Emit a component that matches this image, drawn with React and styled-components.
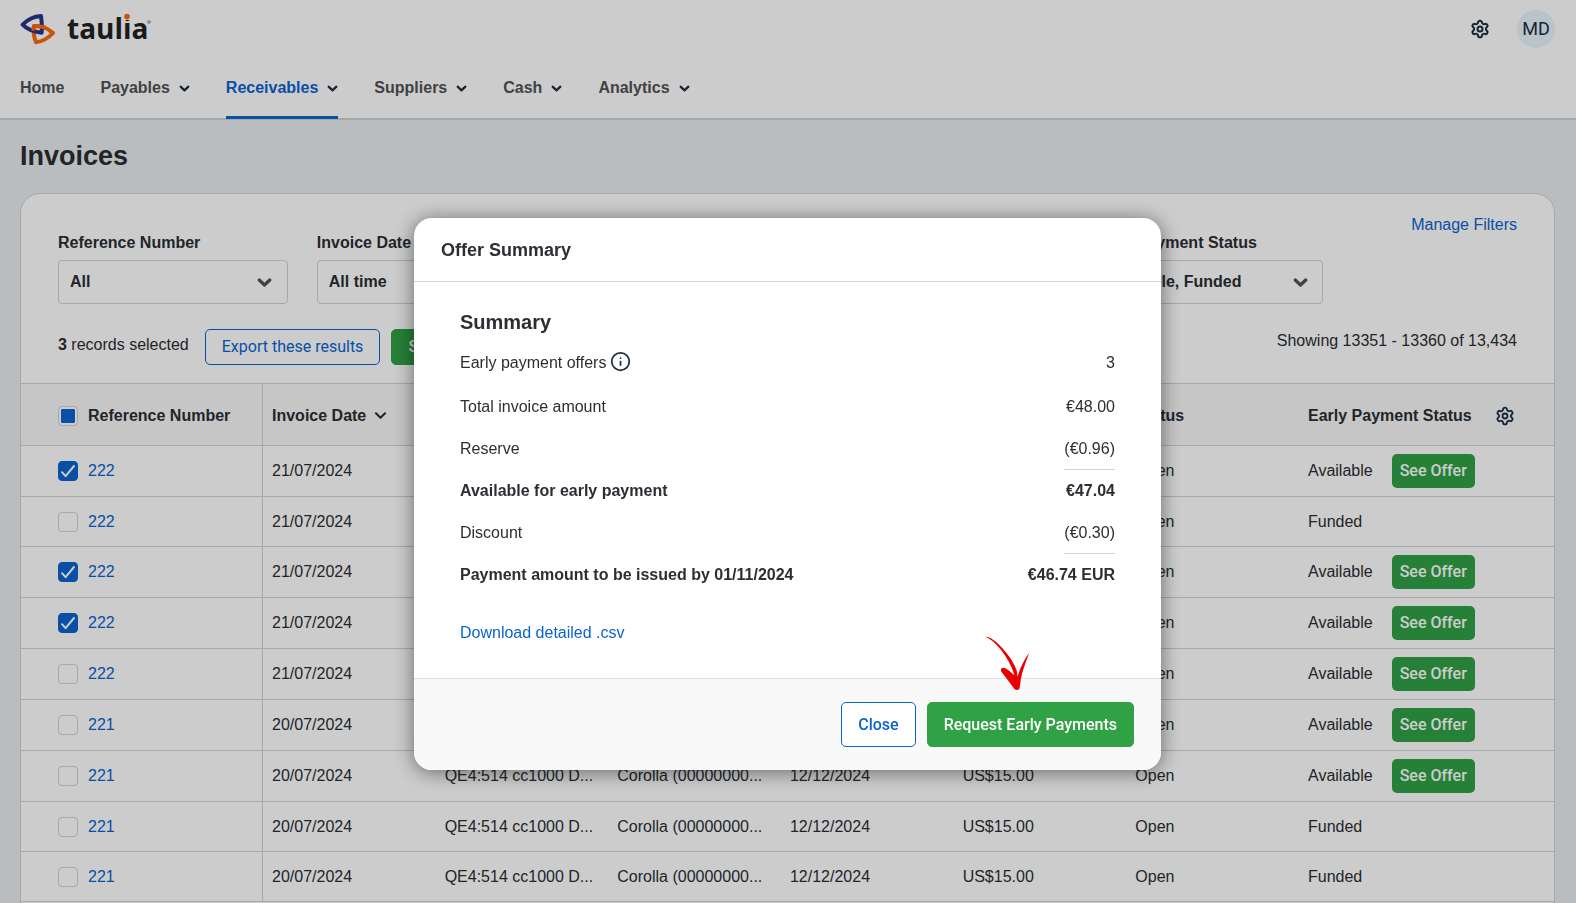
import React, { useEffect, useRef, useState } from 'react';
import styled, { createGlobalStyle } from 'styled-components';
import { Info, Settings } from 'lucide-react';

const blue = '#0a64d0';
const green = '#30a145';
const ink = '#2b2e33';
const line = '#d3d3d3';
const sans = '"Liberation Sans", Arial, sans-serif';
const medium = 'Roboto, "Liberation Sans", sans-serif';

const GlobalStyle = createGlobalStyle`
  *, *::before, *::after { box-sizing: border-box; }
  body {
    margin: 0;
    background: #e8edef;
    color: ${ink};
    font: 16px/20px ${sans};
  }
  h1, h2, h3, dl, dd { margin: 0; }
  button, select { font: inherit; color: inherit; }
`;

const Page = styled.div`
  height: 100vh;
  overflow: hidden;
`;

const Header = styled.header`
  background: #fff;
  border-bottom: 2px solid ${line};
`;

const TopBar = styled.div`
  display: flex;
  align-items: center;
  justify-content: space-between;
  height: 58px;
  padding: 0 21px 0 20px;
`;

const Brand = styled.a`
  display: flex;
  align-items: center;
  gap: 11px;
  color: #222;
  text-decoration: none;
`;

const Wordmark = styled.span`
  position: relative;
  padding-bottom: 2px;
  font: 700 28px/30px "Open Sans", sans-serif;
`;

const WordmarkDots = styled.svg`
  position: absolute;
  left: 0;
  top: 0;
  width: 86px;
  height: 32px;
`;

const Tools = styled.div`
  display: flex;
  align-items: center;
  gap: 27px;
`;

const IconButton = styled.button`
  display: flex;
  padding: 0;
  border: 0;
  background: none;
  color: #1d2d3e;
`;

const Avatar = styled.button`
  width: 38px;
  height: 38px;
  padding: 0;
  border: 0;
  border-radius: 50%;
  background: #e6f4fd;
  color: #1d2d3e;
  font: 18px/20px ${medium};
`;

const Nav = styled.nav`
  display: flex;
  gap: 36px;
  height: 60px;
  padding: 0 20px;
`;

const NavLink = styled.a`
  display: flex;
  align-items: center;
  gap: 9px;
  height: 61px;
  padding-top: 2px;
  border-bottom: 3px solid ${(p) => (p.$active ? blue : 'transparent')};
  color: ${(p) => (p.$active ? blue : '#505255')};
  font-weight: 700;
  text-decoration: none;
  svg { color: #1d2d3e; }
`;

const Main = styled.main`
  padding: 0 21px 0 20px;
`;

const PageTitle = styled.h1`
  padding: 20px 0 21px;
  font-size: 27px;
  line-height: 32px;
`;

const Card = styled.section`
  overflow: hidden;
  padding-bottom: 48px;
  border: 1px solid ${line};
  border-radius: 20px;
  background: #fff;
`;

const FilterBar = styled.div`
  display: flex;
  justify-content: space-between;
  padding: 21px 37px 0;
`;

const Filters = styled.div`
  display: grid;
  flex: 0 1 1265px;
  grid-template-columns: repeat(5, minmax(0, 1fr));
  gap: 29px;
  padding-top: 18px;
`;

const Field = styled.div`
  display: grid;
  gap: 7px;
`;

const FieldLabel = styled.label`
  font-weight: 700;
`;

const SelectBox = styled.div`
  display: grid;
  align-items: center;
  grid-template-columns: 1fr 46px;
  select {
    grid-area: 1 / 1 / 2 / 3;
    width: 100%;
    height: 44px;
    padding: 0 11px;
    appearance: none;
    border: 1px solid ${line};
    border-radius: 4px;
    background: transparent;
    font-weight: 700;
  }
  svg {
    grid-area: 1 / 2;
    justify-self: center;
    pointer-events: none;
    color: #505255;
  }
`;

const TextLink = styled.a`
  color: ${blue};
  text-decoration: none;
  white-space: nowrap;
`;

const ResultBar = styled.div`
  display: flex;
  align-items: flex-start;
  gap: 11px;
  padding: 25px 37px 18px;
`;

const ResultText = styled.p`
  margin: ${(p) => (p.$end ? '2px 0 0 auto' : '6px 5px 0 0')};
`;

const Button = styled.button`
  height: ${(p) => (p.$size === 'large' ? 45 : p.$size === 'small' ? 34 : 36)}px;
  padding: 0 ${(p) => (p.$size === 'small' ? 8 : 16)}px;
  border: 1px solid ${(p) => (p.$primary ? green : blue)};
  border-width: ${(p) => (p.$size === 'small' ? 0 : 1)}px;
  border-radius: 5px;
  background: ${(p) => (p.$primary ? green : '#fff')};
  color: ${(p) => (p.$primary ? '#fff' : blue)};
  font: ${(p) => (p.$plain ? 400 : 500)} 16px/20px ${medium};
  white-space: nowrap;
`;

const Table = styled.table`
  width: 100%;
  table-layout: fixed;
  border-collapse: separate;
  border-spacing: 0;
`;

const Col = styled.col`
  width: ${(p) => p.$width};
`;

const HeadCell = styled.th`
  height: 63px;
  padding: 2px 0 0 9px;
  border: solid ${line};
  border-width: 1px 0;
  background: #f8f8f8;
  text-align: left;
  white-space: nowrap;
  &:first-child {
    padding-left: 37px;
    border-right-width: 1px;
  }
`;

const Cell = styled.td`
  height: 50px;
  padding: 0 0 0 9px;
  border-bottom: 1px solid ${line};
  white-space: nowrap;
  &:first-child {
    padding-left: 37px;
    border-right: 1px solid ${line};
  }
`;

const Inline = styled.div`
  display: flex;
  align-items: center;
  gap: ${(p) => p.$gap}px;
`;

const StatusLine = styled(Inline)`
  padding: ${(p) => (p.$tall ? '8px 0' : '0')};
`;

const CheckBox = styled.span`
  display: grid;
  place-items: center;
  input {
    grid-area: 1 / 1;
    width: 20px;
    height: 20px;
    margin: 0;
    appearance: none;
    border: 1px solid ${line};
    border-radius: 4px;
    background: #fff;
  }
  input:checked {
    border-color: ${blue};
    background: ${blue};
  }
  input:indeterminate {
    padding: 2px;
    background: ${blue} content-box;
    box-shadow: inset 0 0 0 2px #fff;
  }
  svg {
    grid-area: 1 / 1;
    pointer-events: none;
  }
`;

const Overlay = styled.div`
  position: fixed;
  inset: 0;
  display: flex;
  align-items: flex-start;
  justify-content: center;
  padding: 218px 20px 0 19px;
  background: rgba(0, 0, 0, 0.2);
`;

const Dialog = styled.div`
  position: relative;
  width: 100%;
  max-width: 747px;
  border-radius: 18px;
  background: #fff;
  box-shadow: 0 2px 20px rgba(0, 0, 0, 0.5);
`;

const DialogHeader = styled.div`
  padding: 21px 27px 20px;
  border-bottom: 1px solid ${line};
`;

const DialogTitle = styled.h2`
  font-size: 18px;
  line-height: 22px;
`;

const DialogBody = styled.div`
  padding: 28px 46px 35px;
`;

const SummaryTitle = styled.h3`
  padding-bottom: 6px;
  font-size: 20px;
  line-height: 24px;
`;

const SummaryList = styled.dl`
  padding-bottom: 27px;
`;

const SummaryRow = styled.div`
  display: flex;
  align-items: center;
  justify-content: space-between;
  height: ${(p) => (p.$lead ? 46 : 42)}px;
  font-weight: ${(p) => (p.$total ? 700 : 400)};
  dt {
    display: flex;
    align-items: center;
    gap: 4px;
  }
  dt svg {
    margin-bottom: 4px;
    color: #1d2d3e;
  }
  dd {
    line-height: 40px;
    border-bottom: 1px solid ${(p) => (p.$ruled ? line : 'transparent')};
  }
`;

const DialogFooter = styled.div`
  display: flex;
  justify-content: flex-end;
  gap: 11px;
  padding: 23px 27px;
  border-top: 1px solid #dedede;
  border-radius: 0 0 18px 18px;
  background: #f9f9f9;
`;

const ArrowMark = styled.svg`
  position: absolute;
  right: 131px;
  bottom: 79px;
  width: 45px;
  height: 56px;
`;

function Chevron({ size = 11, weight = 2 }) {
  return (
    <svg width={size} height={size} viewBox="0 0 12 12" fill="none" aria-hidden="true">
      <path d="M1.8 4l4.2 4 4.2-4" stroke="currentColor" strokeWidth={weight} strokeLinecap="round" strokeLinejoin="round" />
    </svg>
  );
}

function LogoMark() {
  return (
    <svg width="36" height="32" viewBox="60 38 108 96" fill="none" strokeWidth="12" strokeLinejoin="round" aria-hidden="true">
      <path d="M102 77C122 75 145 84 159 98C146 112 128 123 108 126C102 112 100 92 102 77Z" stroke="#ff6a0a" />
      <path d="M68 73C82 58 104 48 123 47C125 62 127 78 125 97C106 95 82 88 68 73Z" stroke="#27348b" />
      <path d="M101 91C100 85 101 80 102 77C112 76 124 78 136 82" stroke="#ff6a0a" />
    </svg>
  );
}

function Check({ label, mixed = false, initial = false }) {
  const ref = useRef(null);
  const [on, setOn] = useState(initial);
  useEffect(() => {
    ref.current.indeterminate = mixed;
  }, [mixed]);
  return (
    <CheckBox>
      <input ref={ref} type="checkbox" aria-label={label} checked={on} onChange={(e) => setOn(e.target.checked)} />
      {on && (
        <svg width="20" height="20" viewBox="0 0 20 20" fill="none" aria-hidden="true">
          <path d="M4 11.2l3.6 4L16 5" stroke="#fff" strokeWidth="2" strokeLinecap="round" strokeLinejoin="round" />
        </svg>
      )}
    </CheckBox>
  );
}

const navItems = [
  { label: 'Home', plain: true },
  { label: 'Payables' },
  { label: 'Receivables', active: true },
  { label: 'Suppliers' },
  { label: 'Cash' },
  { label: 'Analytics' },
];

const filters = [
  { id: 'reference', label: 'Reference Number', value: 'All' },
  { id: 'invoice-date', label: 'Invoice Date', value: 'All time' },
  { id: 'due-date', label: 'Due Date', value: 'All time' },
  { id: 'status', label: 'Status', value: 'All' },
  { id: 'early-status', label: 'Early Payment Status', value: 'Available, Funded' },
];

const rows = [
  ['222', '21/07/2024', true, true],
  ['222', '21/07/2024', false, false],
  ['222', '21/07/2024', true, true],
  ['222', '21/07/2024', true, true],
  ['222', '21/07/2024', false, true],
  ['221', '20/07/2024', false, true],
  ['221', '20/07/2024', false, true],
  ['221', '20/07/2024', false, false],
  ['221', '20/07/2024', false, false],
].map(([ref, date, selected, available]) => ({ ref, date, selected, available }));

const summary = [
  { label: 'Early payment offers', value: '3', lead: true },
  { label: 'Total invoice amount', value: '€48.00' },
  { label: 'Reserve', value: '(€0.96)', ruled: true },
  { label: 'Available for early payment', value: '€47.04', total: true },
  { label: 'Discount', value: '(€0.30)', ruled: true },
  { label: 'Payment amount to be issued by 01/11/2024', value: '€46.74 EUR', total: true },
];

function InvoiceTable() {
  return (
    <Table>
      <colgroup>
        <Col $width="242px" />
        <Col span={6} $width="auto" />
        <Col $width="255px" />
      </colgroup>
      <thead>
        <tr>
          <HeadCell>
            <Inline $gap={10}>
              <Check label="Select all invoices" mixed />
              Reference Number
            </Inline>
          </HeadCell>
          <HeadCell>
            <Inline $gap={8}>
              Invoice Date
              <Chevron size={13} />
            </Inline>
          </HeadCell>
          <HeadCell>Customer</HeadCell>
          <HeadCell>Supplier</HeadCell>
          <HeadCell>Due Date</HeadCell>
          <HeadCell>Amount</HeadCell>
          <HeadCell>Status</HeadCell>
          <HeadCell>
            <Inline $gap={23}>
              Early Payment Status
              <IconButton aria-label="Table settings">
                <Settings size={20} strokeWidth={2.2} />
              </IconButton>
            </Inline>
          </HeadCell>
        </tr>
      </thead>
      <tbody>
        {rows.map((row, i) => (
          <tr key={i}>
            <Cell>
              <Inline $gap={10}>
                <Check label={`Select invoice ${row.ref}`} initial={row.selected} />
                <TextLink href="#invoice">{row.ref}</TextLink>
              </Inline>
            </Cell>
            <Cell>{row.date}</Cell>
            <Cell>QE4:514 cc1000 D...</Cell>
            <Cell>Corolla (00000000...</Cell>
            <Cell>12/12/2024</Cell>
            <Cell>US$15.00</Cell>
            <Cell>Open</Cell>
            <Cell>
              <StatusLine $gap={19} $tall={row.available}>
                {row.available ? 'Available' : 'Funded'}
                {row.available && <Button $primary $size="small">See Offer</Button>}
              </StatusLine>
            </Cell>
          </tr>
        ))}
      </tbody>
    </Table>
  );
}

function OfferDialog() {
  return (
    <Overlay>
      <Dialog role="dialog" aria-modal="true" aria-labelledby="offer-title">
        <DialogHeader>
          <DialogTitle id="offer-title">Offer Summary</DialogTitle>
        </DialogHeader>
        <DialogBody>
          <SummaryTitle>Summary</SummaryTitle>
          <SummaryList>
            {summary.map((item) => (
              <SummaryRow key={item.label} $lead={item.lead} $total={item.total} $ruled={item.ruled}>
                <dt>
                  {item.label}
                  {item.lead && <Info size={21} strokeWidth={2} />}
                </dt>
                <dd>{item.value}</dd>
              </SummaryRow>
            ))}
          </SummaryList>
          <TextLink href="#csv">Download detailed .csv</TextLink>
        </DialogBody>
        <DialogFooter>
          <Button $size="large">Close</Button>
          <Button $size="large" $primary>Request Early Payments</Button>
        </DialogFooter>
        <ArrowMark viewBox="495 105 135 168" aria-hidden="true">
          <path
            fill="#ea0000"
            d="M496 110C511 110 529 124 546 143C567 166 582 188 590 211L593 230C599 208 611 180 627 160C618 186 607 212 602 240C601 250 600 260 598 267Q592 272 584 268C572 250 557 232 544 215C540 206 547 200 556 205C566 210 575 219 583 226C577 202 561 172 541 147C525 127 509 115 496 110Z"
          />
        </ArrowMark>
      </Dialog>
    </Overlay>
  );
}

export default function App() {
  return (
    <Page>
      <GlobalStyle />
      <Header>
        <TopBar>
          <Brand href="#home">
            <LogoMark />
            <Wordmark>
              taulia
              <WordmarkDots viewBox="0 0 86 32" aria-hidden="true">
                <rect x="55" y="-2" width="11" height="9" fill="#fff" />
                <circle cx="60" cy="3.6" r="2.8" fill="#ff6a0a" />
                <circle cx="82" cy="9" r="1.3" fill="none" stroke="#888" />
              </WordmarkDots>
            </Wordmark>
          </Brand>
          <Tools>
            <IconButton aria-label="Settings">
              <Settings size={20} strokeWidth={2.4} />
            </IconButton>
            <Avatar>MD</Avatar>
          </Tools>
        </TopBar>
        <Nav>
          {navItems.map((item) => (
            <NavLink key={item.label} href="#nav" $active={item.active}>
              {item.label}
              {!item.plain && <Chevron weight={2.4} />}
            </NavLink>
          ))}
        </Nav>
      </Header>
      <Main>
        <PageTitle>Invoices</PageTitle>
        <Card>
          <FilterBar>
            <Filters>
              {filters.map((f) => (
                <Field key={f.id}>
                  <FieldLabel htmlFor={f.id}>{f.label}</FieldLabel>
                  <SelectBox>
                    <select id={f.id} defaultValue={f.value}>
                      <option>{f.value}</option>
                    </select>
                    <Chevron size={15} weight={2.6} />
                  </SelectBox>
                </Field>
              ))}
            </Filters>
            <TextLink href="#filters">Manage Filters</TextLink>
          </FilterBar>
          <ResultBar>
            <ResultText><b>3</b> records selected</ResultText>
            <Button $plain>Export these results</Button>
            <Button $primary>See Offer Summary</Button>
            <ResultText $end>Showing 13351 - 13360 of 13,434</ResultText>
          </ResultBar>
          <InvoiceTable />
        </Card>
      </Main>
      <OfferDialog />
    </Page>
  );
}
